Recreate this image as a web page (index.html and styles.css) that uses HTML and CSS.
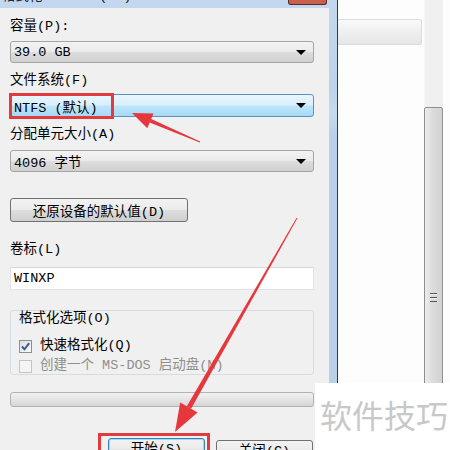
FILE: index.html
```html
<!DOCTYPE html>
<html lang="zh-CN">
<head>
    <meta charset="UTF-8">
    <meta name="viewport" content="width=device-width, initial-scale=1.0">
    <title>格式化 WINXP (C:)</title>
    <link rel="stylesheet" href="styles.css">
</head>
<body>
    <div class="screen">
        <div class="dialog">
            <div class="titlebar">
                <span class="title-text">格式化 WINXP (C:)</span>
                <span class="close-btn"></span>
            </div>
            <div class="client">
                <div class="label first">容量(P):</div>
                <div class="combo"><span>39.0 GB</span><i class="arrow"></i></div>

                <div class="label">文件系统(F)</div>
                <div class="combo focused"><span>NTFS (默认)</span><i class="arrow"></i></div>

                <div class="label">分配单元大小(A)</div>
                <div class="combo low"><span>4096 字节</span><i class="arrow"></i></div>

                <button class="btn restore-btn">还原设备的默认值(D)</button>

                <div class="label volume">卷标(L)</div>
                <div class="textbox">WINXP</div>

                <div class="group">
                    <span class="group-title">格式化选项(O)</span>
                    <div class="check-row">
                        <span class="checkbox checked">
                            <svg width="11" height="11" viewBox="0 0 11 11"><path d="M2 5.5 L4.5 8.3 L9.2 2.2" fill="none" stroke="#3d5a8f" stroke-width="2"/></svg>
                        </span>
                        <span>快速格式化(Q)</span>
                    </div>
                    <div class="check-row disabled">
                        <span class="checkbox"></span>
                        <span>创建一个 MS-DOS 启动盘(M)</span>
                    </div>
                </div>

                <div class="progress"></div>

                <div class="actions">
                    <button class="btn action-btn default">开始(S)</button>
                    <button class="btn action-btn">关闭(C)</button>
                </div>
            </div>
        </div>

        <div class="behind">
            <div class="behind-main">
                <div class="toolbar"></div>
            </div>
            <div class="scrollbar">
                <div class="track"></div>
                <div class="thumb"><span class="grip"></span></div>
            </div>
        </div>
    </div>

    <!-- annotations drawn on top of the screenshot -->
    <div class="mark mark-fs"></div>
    <div class="mark mark-start"></div>
    <svg class="arrows" width="450" height="450" viewBox="0 0 450 450">
        <polygon points="132,113 153.5,113.4 147.3,128.2" fill="#e6383c"/>
        <polygon points="151.2,119 149.6,122.6 199.8,142.5 200.2,141.5" fill="#e6383c"/>
        <polygon points="175,432 197.6,412.6 180.2,402.6" fill="#e6383c"/>
        <polygon points="191.1,408.8 186.7,406.4 296.6,217.8 297.4,218.2" fill="#e6383c"/>
    </svg>

    <div class="watermark">软件技巧</div>
</body>
</html>
```

FILE: styles.css
```css
body {
    margin: 0;
    width: 450px;
    height: 450px;
    overflow: hidden;
    position: relative;
    background: #fdfdfd;
    font-family: "Liberation Mono", "Noto Sans CJK SC", monospace;
    font-size: 13.5px;
    color: #000;
}
.screen {
    display: flex;
    height: 450px;
}
.dialog {
    width: 337px;
    display: flex;
    flex-direction: column;
    background: linear-gradient(#c3d8ee, #bcd3eb 20%, #c6dbf0 25%, #b9d0e9 30%, #b9d0e9);
    border-right: 1px solid #2d3a4c;
}
.titlebar {
    flex: none;
    height: 8px;
    display: flex;
    overflow: hidden;
}
.title-text {
    line-height: 16px;
    margin-top: -11px;
    padding-left: 2px;
    color: #1e2a3a;
    white-space: pre;
}
.close-btn {
    margin-left: auto;
    margin-right: 10px;
    width: 37px;
    height: 4px;
    background: #c9604f;
    border: 1px solid #5c2a22;
    border-top: none;
    border-radius: 0 0 3px 3px;
}
.client {
    flex: 1;
    min-height: 0;
    overflow: hidden;
    width: 329px;
    box-sizing: border-box;
    padding: 0 15px 0 10px;
    background: #f0f0f0;
}
.label {
    line-height: 16px;
    margin-top: 10px;
}
.label.first {
    margin-top: 11px;
}
.label.volume {
    margin-top: 20px;
}
.combo {
    margin-top: 6px;
    height: 22px;
    box-sizing: border-box;
    border: 1px solid #a5a5a5;
    border-radius: 3px;
    background: linear-gradient(#f3f3f3, #ebebeb 48%, #dddddd 52%, #d0d0d0);
    display: flex;
    align-items: center;
    padding: 0 5px 0 3px;
}
.combo.focused {
    margin-top: 5px;
    height: 23px;
    border-color: #5c93bd;
    background: linear-gradient(#eaf6fd, #d9f0fc 48%, #bee6fd 52%, #a7d9f5);
}
.combo.low {
    margin-top: 7px;
}
.combo span {
    flex: 1;
    white-space: pre;
}
.arrow {
    width: 0;
    height: 0;
    border-left: 5px solid transparent;
    border-right: 5px solid transparent;
    border-top: 5px solid #000;
    margin-right: 2px;
}
.btn {
    font: inherit;
    color: #000;
    border: 1px solid #707070;
    border-radius: 3px;
    background: linear-gradient(#f2f2f2, #ebebeb 48%, #dddddd 52%, #cfcfcf);
    padding: 0;
    display: block;
}
.restore-btn {
    margin-top: 26px;
    width: 178px;
    height: 24px;
}
.textbox {
    margin-top: 9px;
    height: 23px;
    box-sizing: border-box;
    background: #fff;
    border: 1px solid #e2e3e5;
    border-top-color: #d6d8db;
    padding-left: 3px;
    line-height: 21px;
}
.group {
    margin-top: 20px;
    height: 65px;
    box-sizing: border-box;
    border: 1px solid #d5dce2;
    border-radius: 3px;
    padding-left: 8px;
}
.group-title {
    display: inline-block;
    margin: -8px 0 0 -3px;
    padding: 0 3px;
    line-height: 16px;
    background: #f0f0f0;
}
.check-row {
    display: flex;
    align-items: center;
    gap: 8px;
    line-height: 16px;
    margin-top: 11px;
}
.check-row.disabled {
    margin-top: 4px;
    color: #8e8e8e;
}
.checkbox {
    width: 13px;
    height: 13px;
    box-sizing: border-box;
    border: 1px solid #8f8f8f;
    background: linear-gradient(135deg, #dcdcdc, #fbfbfb);
    display: flex;
    align-items: center;
    justify-content: center;
}
.check-row.disabled .checkbox {
    border-color: #c4c4c4;
    background: #f4f4f4;
}
.progress {
    margin-top: 17px;
    height: 15px;
    box-sizing: border-box;
    border: 1px solid #b2b2b2;
    border-radius: 3px;
    background: linear-gradient(#f2f2f2, #e4e4e4 50%, #d6d6d6);
}
.actions {
    margin-top: 33px;
    display: flex;
    justify-content: flex-end;
    gap: 11px;
    padding-right: 1px;
}
.action-btn {
    width: 97px;
    height: 23px;
    line-height: 21px;
}
.action-btn.default {
    border-color: #3c7fb1;
    box-shadow: inset 0 0 0 1px #9fdaf8;
    margin-top: -2px;
}
.behind {
    flex: 1;
    display: flex;
    background: #fdfdfd;
}
.behind-main {
    width: 86px;
}
.toolbar {
    margin-top: 19px;
    margin-right: 2px;
    height: 26px;
    box-sizing: border-box;
    border: 1px solid #dcdcdc;
    border-left: none;
    border-radius: 0 3px 3px 0;
    background: linear-gradient(#fafafa, #efefef 50%, #e6e6e6);
}
.scrollbar {
    width: 19px;
    display: flex;
    flex-direction: column;
}
.track {
    flex: none;
    height: 107px;
    background: #f0f0f0;
    border-left: 1px solid #f5f5f5;
}
.thumb {
    flex: none;
    height: 290px;
    box-sizing: border-box;
    border: 1px solid #8f8f8f;
    border-radius: 2px;
    background: linear-gradient(90deg, #ececec, #dcdcdc 45%, #d2d2d2);
    display: flex;
    justify-content: center;
    padding-top: 185px;
}
.grip {
    width: 7px;
    height: 9px;
    background: repeating-linear-gradient(#555 0 1px, #f0f0f0 1px 2px, transparent 2px 4px);
}
.mark {
    position: absolute;
    border: 3px solid #e23a3e;
    box-sizing: border-box;
}
.mark-fs {
    left: 9px;
    top: 93px;
    width: 105px;
    height: 26px;
}
.mark-start {
    left: 98px;
    top: 433px;
    width: 112px;
    height: 30px;
}
.arrows {
    position: absolute;
    left: 0;
    top: 0;
}
.watermark {
    position: absolute;
    right: 0;
    bottom: 0;
    width: 135px;
    height: 67px;
    box-sizing: border-box;
    background: #fff;
    padding: 11px 0 0 5px;
    font-family: "Noto Sans CJK SC", sans-serif;
    font-size: 32px;
    line-height: 40px;
    color: #c8c8c8;
    white-space: nowrap;
}
```
